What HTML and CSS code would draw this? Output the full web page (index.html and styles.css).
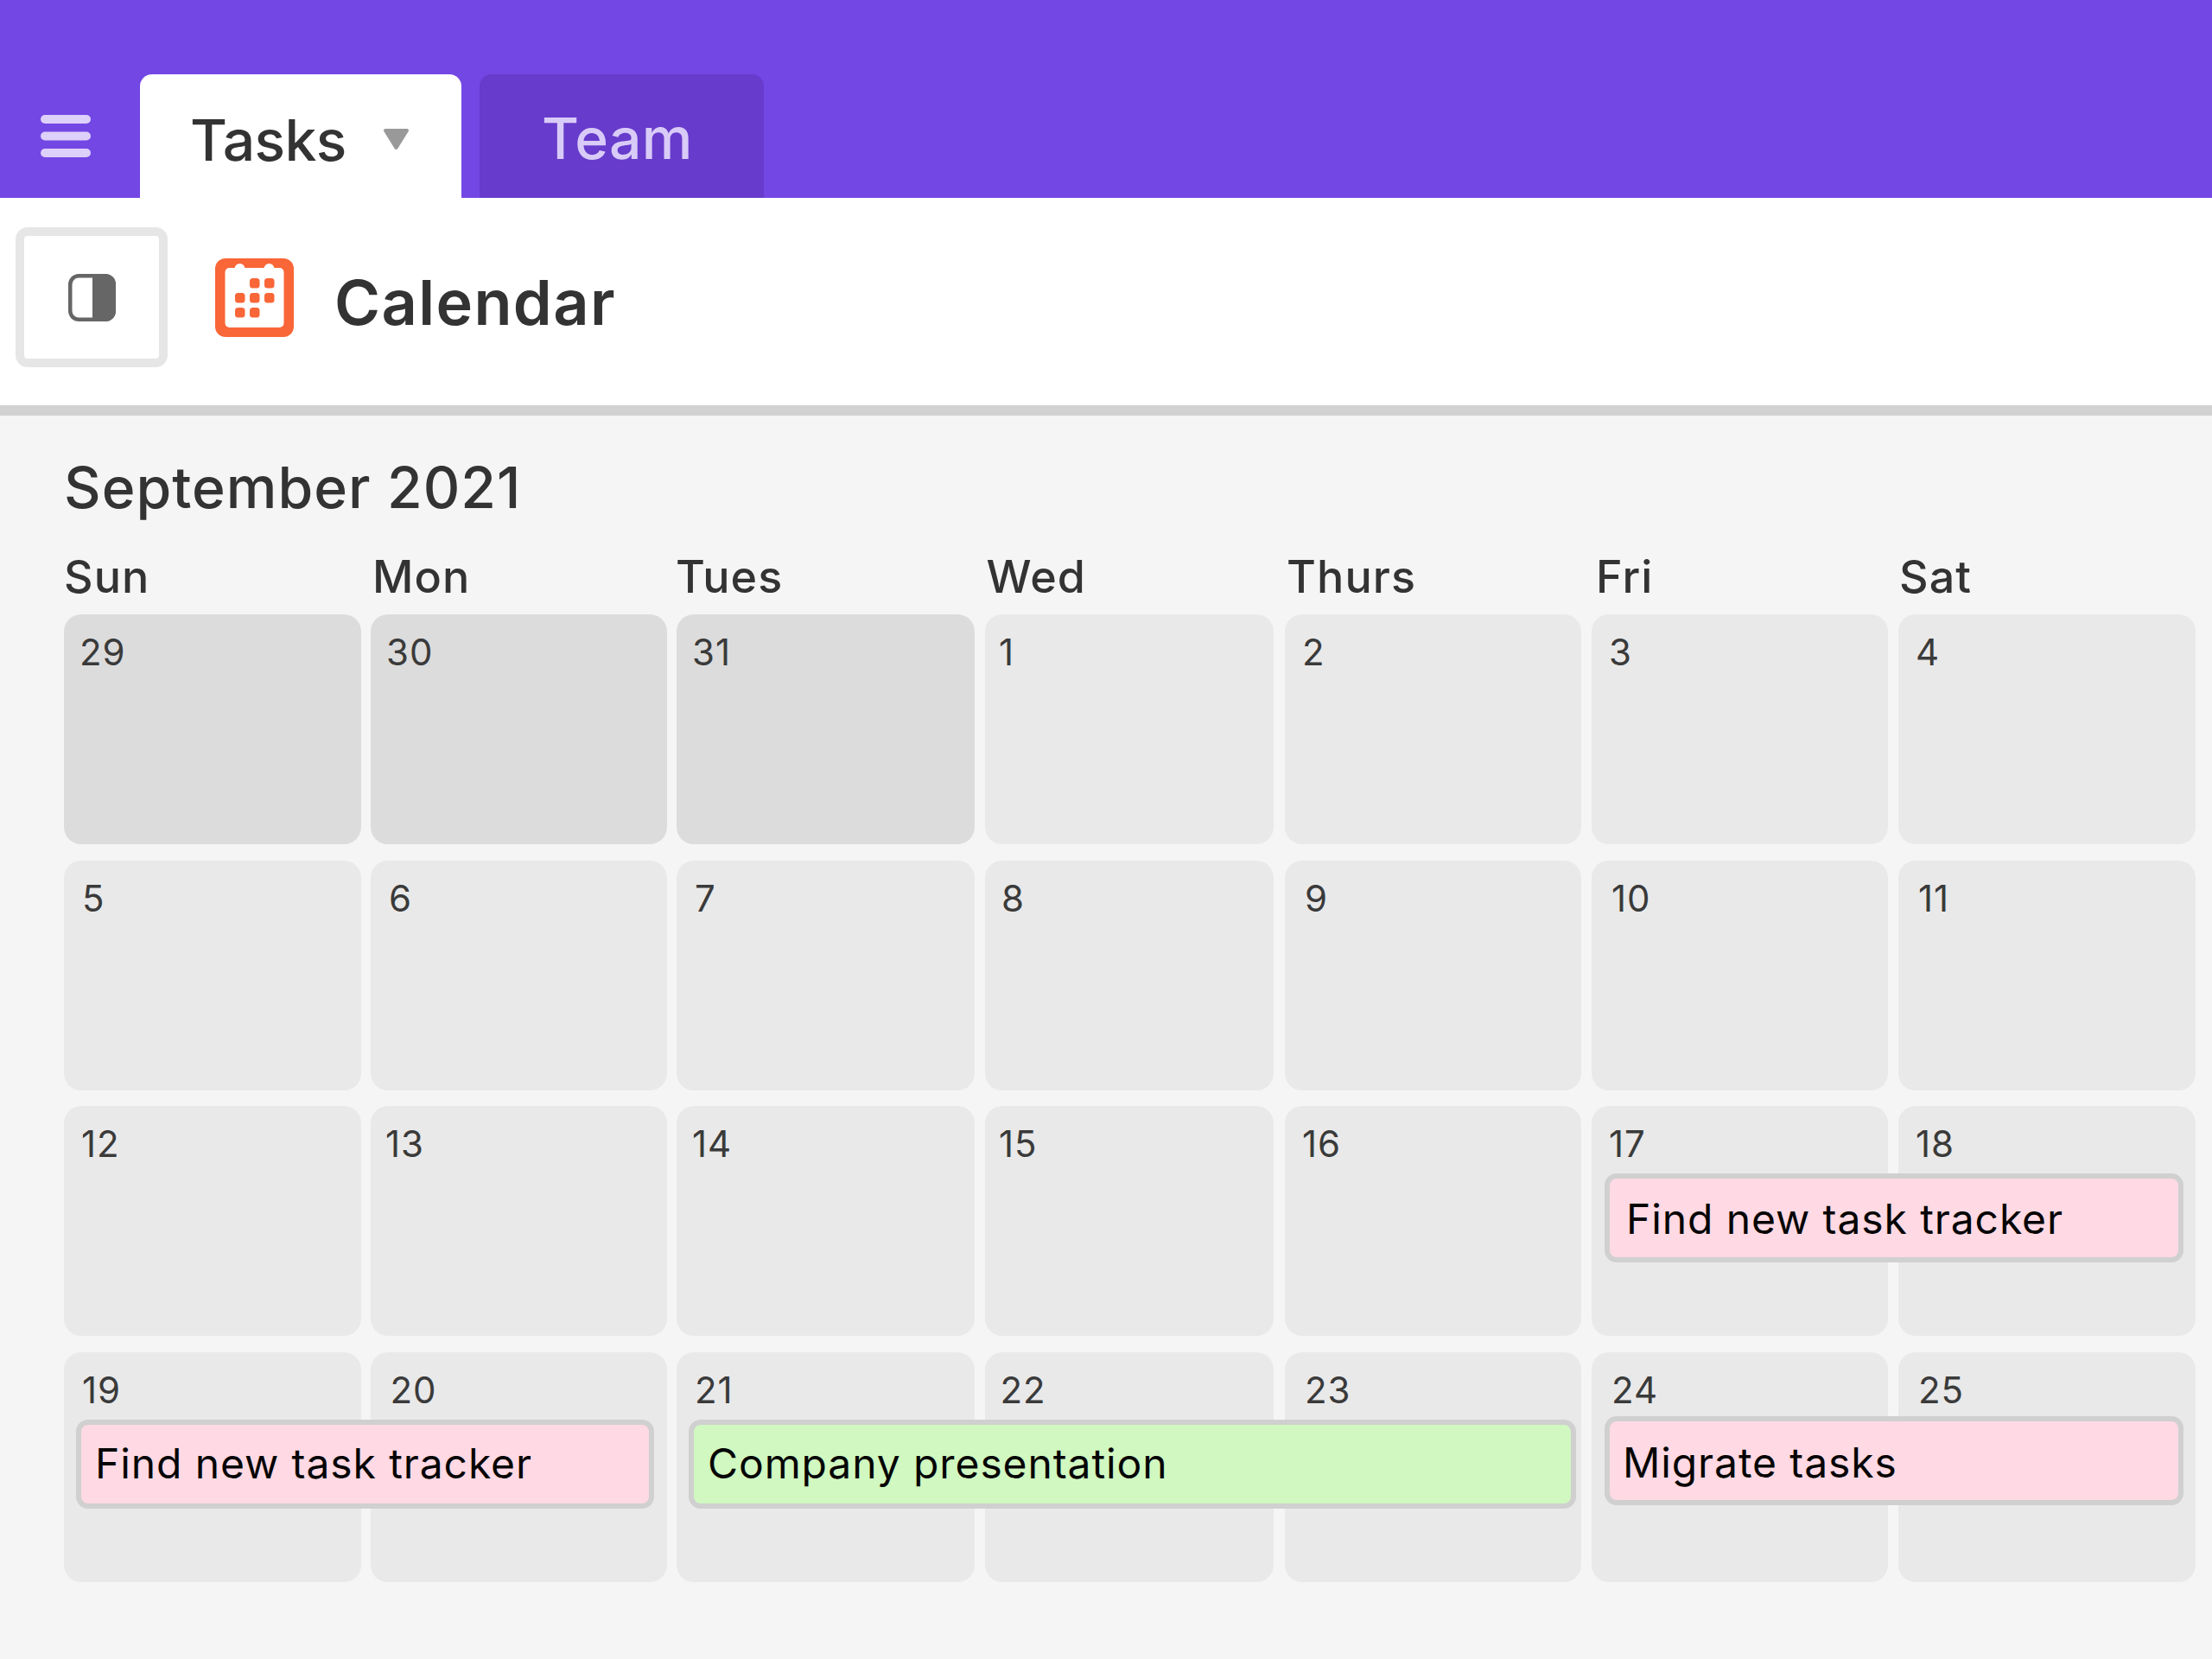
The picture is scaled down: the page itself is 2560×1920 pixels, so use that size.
FILE: index.html
```html
<!DOCTYPE html>
<html lang="en">
<head>
<meta charset="utf-8">
<title>Calendar</title>
<link rel="stylesheet" href="styles.css">
</head>
<body>
<header class="topbar">
  <svg class="menu-icon" viewBox="0 0 58 49" aria-hidden="true">
    <rect x="0" y="0" width="58" height="10" rx="5"/>
    <rect x="0" y="19.5" width="58" height="10" rx="5"/>
    <rect x="0" y="39" width="58" height="10" rx="5"/>
  </svg>
  <div class="tab tab-active">
    <span>Tasks</span>
    <svg class="caret" viewBox="0 0 29 24" aria-hidden="true"><path d="M2 0h25a2 2 0 0 1 1.700 3L16.300 23a2.200 2.200 0 0 1-3.600 0L.300 3A2 2 0 0 1 2 0z"/></svg>
  </div>
  <div class="tab tab-muted">Team</div>
</header>
<section class="toolbar">
  <button class="panel-btn" type="button" aria-label="Toggle sidebar">
    <svg class="panel-icon" viewBox="0 0 55 55" aria-hidden="true">
      <rect x="2.250" y="2.250" width="50.500" height="50.500" rx="10" fill="#fff" stroke="#666" stroke-width="4.500"/>
      <path d="M28 0h15a12 12 0 0 1 12 12v31a12 12 0 0 1-12 12H28z" fill="#666"/>
    </svg>
  </button>
  <svg class="cal-icon" viewBox="0 0 91 91" aria-hidden="true">
    <rect width="91" height="91" rx="12" fill="#f96637"/>
    <rect x="11.500" y="11" width="68" height="69" rx="5" fill="#fff"/>
    <circle cx="28.500" cy="12" r="6" fill="#fff"/>
    <circle cx="62.500" cy="12" r="6" fill="#fff"/>
    <g fill="#f96637">
      <rect x="40" y="23" width="11.500" height="11.500" rx="3.500"/>
      <rect x="57" y="23" width="11.500" height="11.500" rx="3.500"/>
      <rect x="23" y="40" width="11.500" height="11.500" rx="3.500"/>
      <rect x="40" y="40" width="11.500" height="11.500" rx="3.500"/>
      <rect x="57" y="40" width="11.500" height="11.500" rx="3.500"/>
      <rect x="23" y="57" width="11.500" height="11.500" rx="3.500"/>
      <rect x="40" y="57" width="11.500" height="11.500" rx="3.500"/>
    </g>
  </svg>
  <h1 class="page-title">Calendar</h1>
</section>
<main class="content">
  <h2 class="month">September 2021</h2>
  <div class="week-grid weekdays">
    <div>Sun</div><div>Mon</div><div>Tues</div><div>Wed</div><div>Thurs</div><div>Fri</div><div>Sat</div>
  </div>
  <div class="week-grid week week-a">
    <div class="cell cell-past">29</div><div class="cell cell-past">30</div><div class="cell cell-past">31</div><div class="cell">1</div><div class="cell">2</div><div class="cell">3</div><div class="cell">4</div>
  </div>
  <div class="week-grid week week-b">
    <div class="cell">5</div><div class="cell">6</div><div class="cell">7</div><div class="cell">8</div><div class="cell">9</div><div class="cell">10</div><div class="cell">11</div>
  </div>
  <div class="week-grid week week-c">
    <div class="cell">12</div><div class="cell">13</div><div class="cell">14</div><div class="cell">15</div><div class="cell">16</div><div class="cell">17</div><div class="cell">18</div>
    <div class="event event-pink event-a">Find new task tracker</div>
  </div>
  <div class="week-grid week week-d">
    <div class="cell">19</div><div class="cell">20</div><div class="cell">21</div><div class="cell">22</div><div class="cell">23</div><div class="cell">24</div><div class="cell">25</div>
    <div class="event event-pink event-b">Find new task tracker</div>
    <div class="event event-green event-c">Company presentation</div>
    <div class="event event-pink event-d">Migrate tasks</div>
  </div>
</main>
</body>
</html>
```
FILE: styles.css
```css
* { box-sizing: border-box; }
html, body { margin: 0; height: 100%; }
body {
  background: #f5f5f5;
  color: #333;
  font-family: Inter, "Liberation Sans", sans-serif;
}
.topbar {
  display: flex;
  align-items: flex-end;
  height: 229px;
  padding-left: 47px;
  background: #7347e4;
}
.menu-icon {
  align-self: flex-start;
  width: 58px;
  height: 49px;
  margin-top: 133px;
  fill: #ddd0fa;
}
.tab {
  height: 143px;
  border-radius: 14px 14px 0 0;
  font-size: 66px;
  font-weight: 450;
  line-height: 80px;
}
.tab-active {
  display: flex;
  align-items: flex-start;
  width: 372px;
  margin-left: 57px;
  padding: 36px 0 0 58px;
  background: #fff;
  color: #333;
  letter-spacing: -0.600px;
}
.caret {
  width: 29px;
  height: 24px;
  margin: 27px 0 0 43px;
  fill: #999;
}
.tab-muted {
  width: 329px;
  margin-left: 21px;
  padding: 34px 0 0 72px;
  background: #673bcb;
  color: #d9cbf8;
  letter-spacing: 0.300px;
}
.toolbar {
  display: flex;
  align-items: flex-start;
  height: 252px;
  padding: 34px 0 0 18px;
  background: #fff;
  border-bottom: 12px solid #d2d2d2;
}
.panel-btn {
  display: flex;
  align-items: center;
  justify-content: center;
  width: 176px;
  height: 162px;
  padding: 0;
  background: #fff;
  border: 10.500px solid #e6e6e6;
  border-radius: 14px;
}
.panel-icon { width: 55px; height: 55px; }
.cal-icon {
  width: 91px;
  height: 91px;
  margin: 36px 0 0 55px;
}
.page-title {
  margin: 43px 0 0 47px;
  font-size: 72px;
  line-height: 87px;
  font-weight: 600;
  letter-spacing: 1.400px;
}
.content { padding: 43px 0 0 74px; }
.month {
  margin: 0;
  font-size: 66px;
  line-height: 80px;
  font-weight: 500;
  letter-spacing: 1px;
}
.week-grid {
  display: grid;
  grid-template-columns: 344px 343px 346px 336px 344px 344px 344px;
  column-gap: 11px;
}
.weekdays {
  margin: 32px 0 12px;
  font-size: 52px;
  font-weight: 450;
  line-height: 63px;
  letter-spacing: 1.100px;
}
.weekdays div:nth-child(2) { padding-left: 2px; }
.weekdays div:nth-child(3) { margin-left: -1px; }
.weekdays div:nth-child(4) { padding-left: 1.500px; }
.weekdays div:nth-child(5) { padding-left: 2px; }
.weekdays div:nth-child(6) { padding-left: 5px; }
.weekdays div:nth-child(7) { padding-left: 1px; }
.week {
  grid-template-rows: 266px;
  margin-bottom: 18.670px;
}
.week-a { --pad: 18px; }
.week-b { --pad: 21px; }
.week-c { --pad: 18px; }
.week-d { --pad: 21px; }
.cell {
  grid-row: 1;
  padding: 18px 0 0 calc(var(--pad) + var(--nudge, 0px));
  background: #e9e9e9;
  border-radius: 20px;
  color: #3a3a3a;
  font-size: 42px;
  line-height: 51px;
  letter-spacing: 1px;
}
.cell:nth-child(1) { grid-column: 1; }
.cell:nth-child(2) { grid-column: 2; }
.cell:nth-child(3) { grid-column: 3; margin-right: 1px; }
.cell:nth-child(4) { grid-column: 4; margin-right: 2px; --nudge: -2px; }
.cell:nth-child(5) { grid-column: 5; margin-right: 1px; --nudge: 2px; }
.cell:nth-child(6) { grid-column: 6; margin-right: 1px; --nudge: 2px; }
.cell:nth-child(7) { grid-column: 7; --nudge: 2px; }
.week-c .cell:nth-child(1) { --nudge: 2px; }
.week-c .cell:nth-child(2) { --nudge: -1px; }
.week-d .cell:nth-child(2) { --nudge: 1.500px; }
.week-d .cell:nth-child(4) { --nudge: -3.500px; }
.cell-past { background: #dcdcdc; }
.event {
  grid-row: 1;
  align-self: start;
  height: 103px;
  margin: 78px 14px 0 15px;
  padding: 18px 0 0 18px;
  border: 6px solid #d0d0d0;
  border-radius: 14px;
  color: #050505;
  font-size: 48px;
  font-weight: 430;
  line-height: 58px;
  letter-spacing: 0.900px;
}
.event-pink { background: #ffd9e3; }
.event-green { background: #d0f8c0; }
.event-a { grid-column: 6 / span 2; padding-left: 19px; }
.event-b { grid-column: 1 / span 2; margin: 78px 15px 0 14px; padding: 16px 0 0 16px; }
.event-c { grid-column: 3 / span 3; margin: 78px 7px 0 14px; padding: 16px 0 0 16px; }
.event-d { grid-column: 6 / span 2; margin-top: 74px; padding: 19px 0 0 15px; }
```
